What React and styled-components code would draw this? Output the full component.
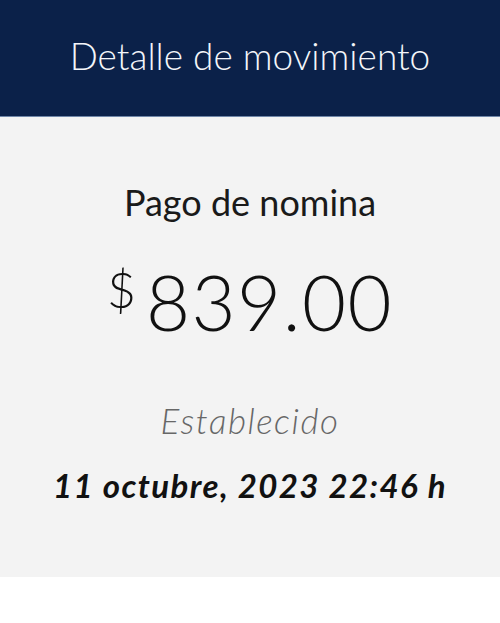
import React from "react"
import styled, { createGlobalStyle } from "styled-components"

const GlobalStyle = createGlobalStyle`
  html, body {
    margin: 0;
    padding: 0;
    background: #ffffff;
    font-family: Lato, "Open Sans", sans-serif;
  }
`

export default function App() {
  return (
    <Page>
      <GlobalStyle />
      <Header>
        <Title>Detalle de movimiento</Title>
      </Header>
      <Body>
        <Concept>Pago de nomina</Concept>
        <Amount>
          <Currency>$</Currency>
          <Value>839.00</Value>
        </Amount>
        <Status>Establecido</Status>
        <DateText>11 octubre, 2023 22:46 h</DateText>
      </Body>
    </Page>
  )
}

const Page = styled.div`
  width: 500px;
  min-height: 623px;
  display: flex;
  flex-direction: column;
  background: #fff;
`

const Header = styled.header`
  height: 117px;
  box-sizing: border-box;
  padding-top: 34px;
  background: #0b2149;
  display: flex;
  justify-content: center;
  border-bottom: 1px solid #6f86a8;
`

const Title = styled.h1`
  margin: 0;
  font-family: Lato, sans-serif;
  font-weight: 300;
  font-size: 37px;
  line-height: 1.2;
  color: #f4f6fa;
`

const Body = styled.main`
  height: 460px;
  background: #f3f3f3;
  display: flex;
  flex-direction: column;
  align-items: center;
  padding-top: 64px;
  box-sizing: border-box;
`

const Concept = styled.div`
  font-weight: 400;
  font-size: 36px;
  line-height: 1.2;
  color: #1a1a1a;
`

const Amount = styled.div`
  display: flex;
  align-items: flex-start;
  margin-top: 32px;
  color: #111;
`

const Currency = styled.span`
  font-weight: 300;
  font-size: 50px;
  line-height: 1.2;
  margin-top: 3px;
  margin-right: 10px;
`

const Value = styled.span`
  font-weight: 300;
  font-size: 76px;
  line-height: 1.2;
  letter-spacing: 1.5px;
`

const Status = styled.div`
  margin-top: 52px;
  font-style: italic;
  font-weight: 300;
  font-size: 35px;
  line-height: 1.2;
  letter-spacing: 1.5px;
  color: #676767;
`

const DateText = styled.div`
  margin-top: 25px;
  font-style: italic;
  font-weight: 700;
  font-size: 33px;
  line-height: 1.2;
  letter-spacing: 1.4px;
  color: #111;
`
